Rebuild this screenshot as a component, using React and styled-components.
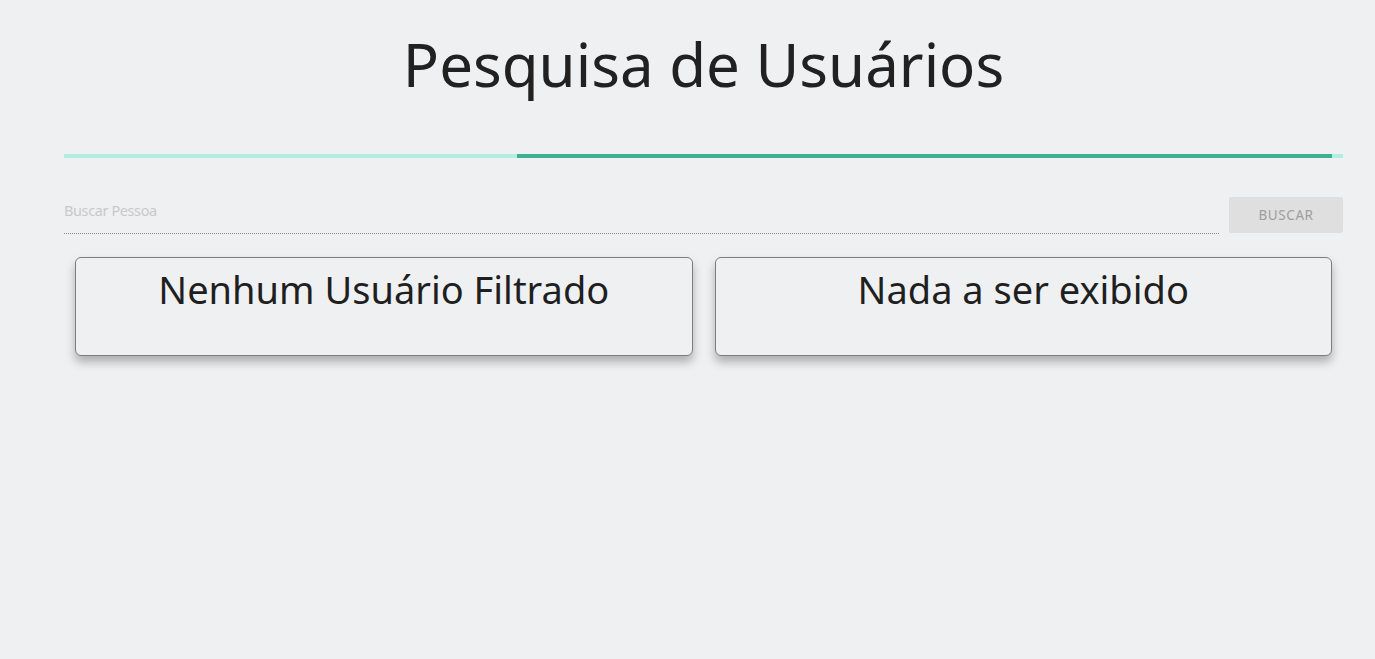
import React from "react"
import styled, { createGlobalStyle } from "styled-components"

const Global = createGlobalStyle`
  html, body {
    margin: 0;
    padding: 0;
    background: #eff0f2;
    font-family: "Noto Sans", "Open Sans", sans-serif;
    color: #212121;
  }
`

const Page = styled.div`
  padding: 0 32px 0 64px;
  min-height: 659px;
  box-sizing: border-box;
`

const Title = styled.h1`
  margin: 0;
  padding-top: 22px;
  height: 130px;
  box-sizing: border-box;
  text-align: center;
  font-size: 60px;
  font-weight: 400;
  letter-spacing: 0;
  line-height: 84px;
`

const Progress = styled.div`
  height: 4px;
  background: #b2efe0;
  display: flex;
  padding-left: 453px;
  padding-right: 11px;
  margin-top: 24px;
`

const Indeterminate = styled.div`
  flex: 1;
  background: #3daf93;
`

const SearchRow = styled.div`
  display: flex;
  align-items: flex-end;
  gap: 10px;
  margin-top: 34px;
`

const Input = styled.input`
  flex: 1;
  height: 36px;
  border: none;
  border-bottom: 1px dotted #8a8a8a;
  background: transparent;
  padding: 0 0 5px 0;
  font-family: inherit;
  font-size: 14.5px;
  letter-spacing: -0.4px;
  outline: none;
  &::placeholder {
    color: #c9c9c9;
  }
`

const Button = styled.button`
  width: 114px;
  height: 36px;
  border: none;
  border-radius: 2px;
  background: #dfdfdf;
  color: #9e9e9e;
  font-family: inherit;
  font-size: 13.5px;
  letter-spacing: 0.6px;
  text-transform: uppercase;
  margin-bottom: 1px;
  cursor: default;
`

const Grid = styled.div`
  display: grid;
  grid-template-columns: 1fr 1fr;
  margin-top: 23px;
`

const Col = styled.div`
  padding: 0 11px;
`

const Card = styled.div`
  height: 99px;
  box-sizing: border-box;
  border: 1px solid #7d7d7d;
  border-radius: 6px;
  background: #eff0f2;
  box-shadow: 0 6px 10px rgba(0, 0, 0, 0.28);
  text-align: center;
  font-size: 38px;
  line-height: 62px;
  color: #1f1f1f;
`

export default function App() {
  return (
    <>
      <Global />
      <Page>
        <Title>Pesquisa de Usuários</Title>
        <Progress>
          <Indeterminate />
        </Progress>
        <SearchRow>
          <Input placeholder="Buscar Pessoa" />
          <Button disabled>Buscar</Button>
        </SearchRow>
        <Grid>
          <Col>
            <Card>Nenhum Usuário Filtrado</Card>
          </Col>
          <Col>
            <Card>Nada a ser exibido</Card>
          </Col>
        </Grid>
      </Page>
    </>
  )
}
